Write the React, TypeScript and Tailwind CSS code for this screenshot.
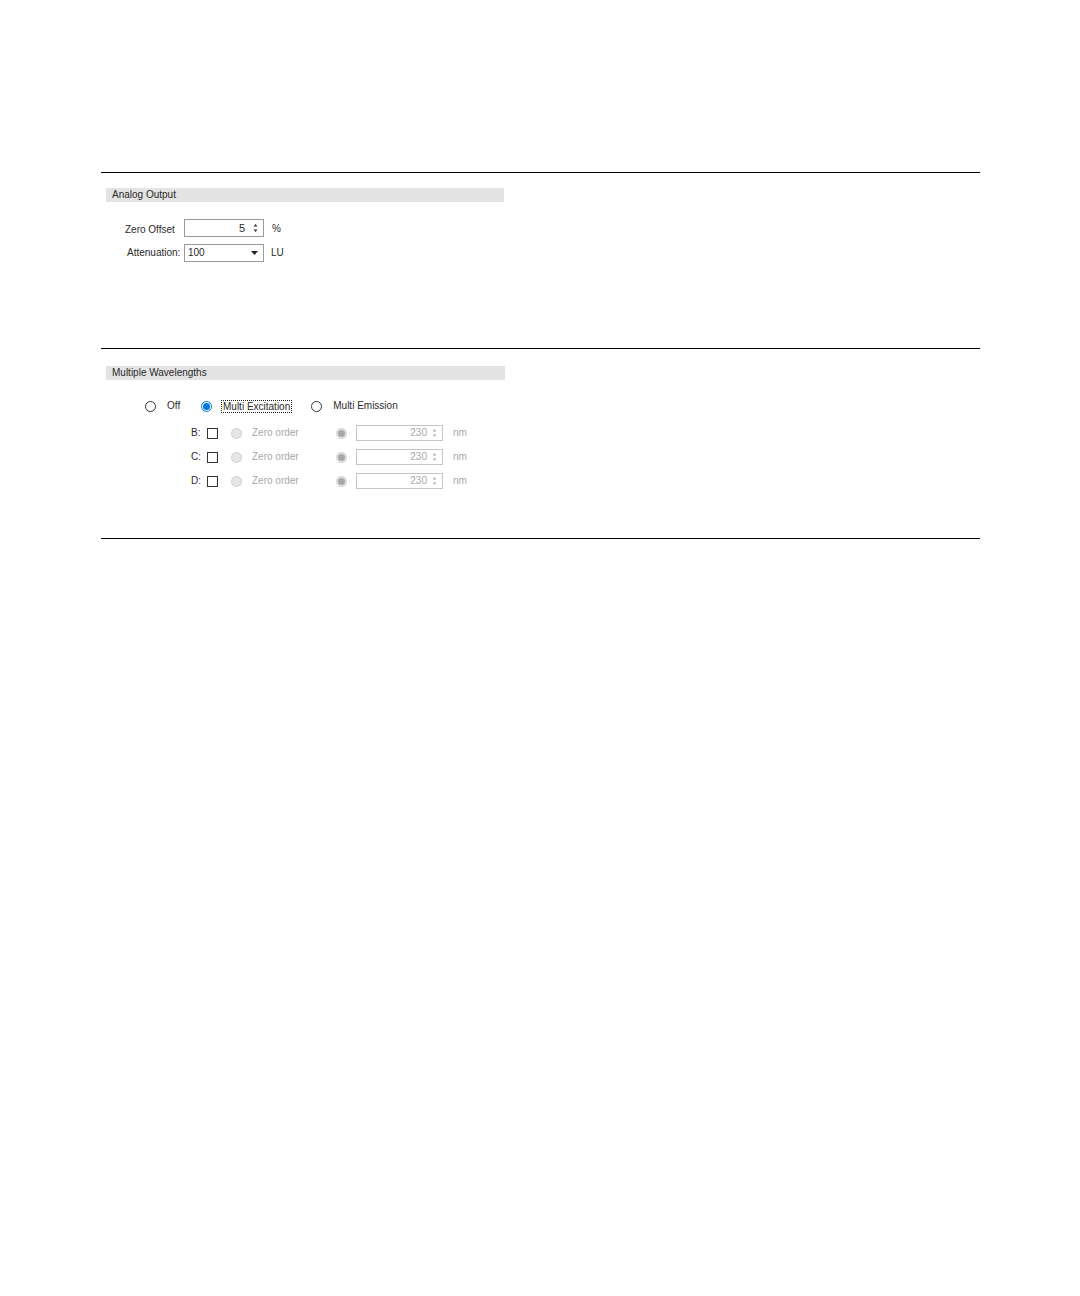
import React from "react";

const font = { fontFamily: '"Liberation Sans", Arial, sans-serif' };

function Spinner({ color = "#333" }: { color?: string }) {
  return (
    <svg width="5" height="10" viewBox="0 0 5 10" className="shrink-0">
      <path d="M2.5 1 L4.5 3.5 L0.5 3.5 Z" fill={color} />
      <path d="M2.5 9 L4.5 6.5 L0.5 6.5 Z" fill={color} />
    </svg>
  );
}

function Radio({ checked = false, disabled = false, disabledDot = false }: { checked?: boolean; disabled?: boolean; disabledDot?: boolean }) {
  if (disabled) {
    return (
      <span className="w-[11px] h-[11px] rounded-full border border-[#cfcfcf] bg-[#e6e6e6] flex items-center justify-center shrink-0">
        {disabledDot && <span className="block w-[7px] h-[7px] rounded-full bg-[#a8a8a8]" />}
      </span>
    );
  }
  if (checked) {
    return (
      <span className="w-[11px] h-[11px] rounded-full border border-[#0078d7] bg-white flex items-center justify-center shrink-0">
        <span className="block w-[7px] h-[7px] rounded-full bg-[#0078d7]" />
      </span>
    );
  }
  return <span className="block w-[11px] h-[11px] rounded-full border border-[#333] bg-white shrink-0" />;
}

function WlRow({ letter, first }: { letter: string; first?: boolean }) {
  return (
    <div className={`flex items-center h-[16px] ${first ? "mt-[12px]" : "mt-[8px]"}`}>
      <span className="ml-[90px] w-[15px] text-[#2a2a2a]">{letter}:</span>
      <span className="block ml-[1px] w-[11px] h-[11px] border border-[#333] bg-white shrink-0" />
      <span className="block ml-[13px]"><Radio disabled /></span>
      <span className="ml-[10px] w-[84px] text-[#a8a8a8]">Zero order</span>
      <span className="block"><Radio disabled disabledDot /></span>
      <div className="ml-[9px] w-[87px] h-[16px] border border-[#c4c4c4] bg-white flex items-center justify-end pr-[5px] gap-[5px] text-[#a8a8a8]">
        <span>230</span>
        <Spinner color="#b5b5b5" />
      </div>
      <span className="ml-[10px] text-[#a8a8a8]">nm</span>
    </div>
  );
}

export default function App() {
  return (
    <div className="min-h-[1296px] w-[1080px] bg-white text-[10px] leading-[12px] text-[#2a2a2a]" style={font}>
      <div className="pt-[172px] ml-[101px] w-[879px]">
        <div className="h-px bg-black" />

        <div className="mt-[15px] ml-[5px] w-[398px] h-[14px] bg-[#e3e3e3] pl-[6px] leading-[14px]">
          Analog Output
        </div>

        <div className="mt-[17px] flex items-center h-[18px]">
          <span className="ml-[24px] w-[59px] pt-[3px]">Zero Offset</span>
          <div className="w-[80px] h-[18px] border border-[#9a9a9a] bg-white flex items-center justify-end pr-[5px] gap-[8px]">
            <span className="text-[11px]">5</span>
            <Spinner />
          </div>
          <span className="ml-[8px] pt-[2px]">%</span>
        </div>

        <div className="mt-[7px] flex items-center h-[18px]">
          <span className="ml-[26px] w-[57px]">Attenuation:</span>
          <div className="w-[80px] h-[18px] border border-[#9a9a9a] bg-white flex items-center justify-between pl-[3px] pr-[5px]">
            <span>100</span>
            <svg width="7" height="4" viewBox="0 0 7 4">
              <path d="M0 0 L7 0 L3.5 4 Z" fill="#222" />
            </svg>
          </div>
          <span className="ml-[7px]">LU</span>
        </div>

        <div className="mt-[86px] h-px bg-black" />

        <div className="mt-[17px] ml-[5px] w-[399px] h-[14px] bg-[#e3e3e3] pl-[6px] leading-[14px]">
          Multiple Wavelengths
        </div>

        <div className="mt-[19px] flex items-center h-[14px]">
          <span className="block ml-[44px]"><Radio /></span>
          <span className="ml-[11px] w-[34px]">Off</span>
          <Radio checked />
          <span className="ml-[9px] px-[1px] border border-dotted border-[#222] leading-[11px]">Multi Excitation</span>
          <span className="block ml-[19px]"><Radio /></span>
          <span className="ml-[11px]">Multi Emission</span>
        </div>

        <WlRow letter="B" first />
        <WlRow letter="C" />
        <WlRow letter="D" />

        <div className="mt-[49px] h-px bg-black" />
      </div>
    </div>
  );
}
